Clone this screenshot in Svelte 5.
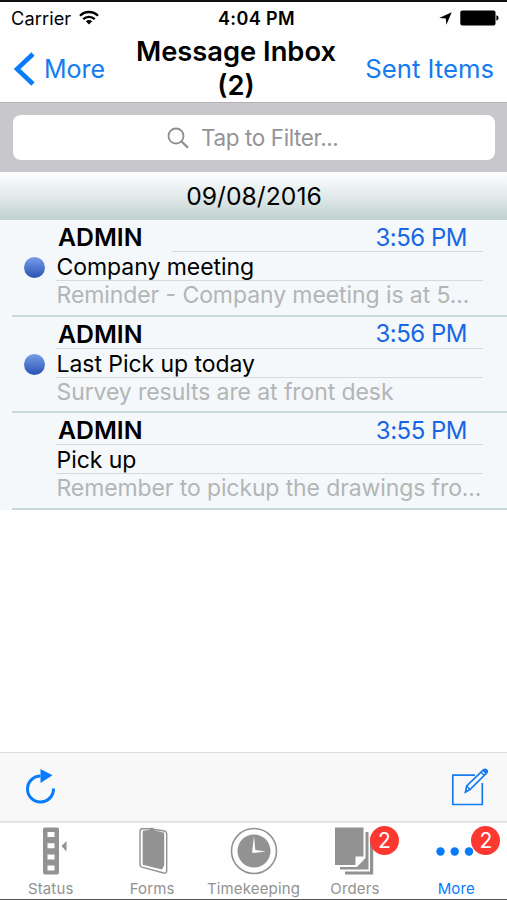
<script lang="ts">
    const messages = [
        { from: 'ADMIN', time: '3:56 PM', subject: 'Company meeting', preview: 'Reminder - Company meeting is at 5...', unread: true, previewWidth: 413 },
        { from: 'ADMIN', time: '3:56 PM', subject: 'Last Pick up today', preview: 'Survey results are at front desk', unread: true, previewWidth: 337 },
        { from: 'ADMIN', time: '3:55 PM', subject: 'Pick up', preview: 'Remember to pickup the drawings fro...', unread: false, previewWidth: 425 },
    ];

    const tabs = [
        { name: 'Status', badge: 0 },
        { name: 'Forms', badge: 0 },
        { name: 'Timekeeping', badge: 0 },
        { name: 'Orders', badge: 2 },
        { name: 'More', badge: 2 },
    ];

    let currentTab = $state('More');
    let filter = $state('');
</script>

<div class="phone">
    <header class="header">
        <div class="statusBar">
            <div class="statusBar_side">
                <span class="statusBar_carrier">Carrier</span>
                <svg width="20" height="16" viewBox="0 0 20 16" fill="none" stroke="#000" stroke-width="2.3">
                    <path d="M1 5.8C6 .7 14 .7 19 5.8M4.2 9.2c3.3-3.2 8.3-3.2 11.6 0" />
                    <path d="M10 14.5 6.8 11.3c1.8-1.7 4.6-1.7 6.4 0z" fill="#000" stroke="none" />
                </svg>
            </div>
            <span class="statusBar_time">4:04 PM</span>
            <div class="statusBar_side isRight">
                <svg width="13" height="13" viewBox="0 0 13 13">
                    <path d="M12.7.3 7.4 12.8 6.8 6.5.2 6z" />
                </svg>
                <svg class="statusBar_battery" width="39" height="16" viewBox="0 0 39 16">
                    <rect x=".3" y=".5" width="35.2" height="15" rx="2" />
                    <path d="M36.4 5.3q2.2.8 2.2 2.7t-2.2 2.7z" />
                </svg>
            </div>
        </div>
        <nav class="navBar">
            <button class="navBar_button">
                <svg width="21" height="34" viewBox="0 0 21 34" fill="none" stroke="#087bfb" stroke-width="4.6">
                    <path d="M19 2 3 17 19 32" />
                </svg>
                <span class="navBar_back">More</span>
            </button>
            <h1 class="navBar_title"><span>Message Inbox</span><span>(2)</span></h1>
            <button class="navBar_button isRight"><span class="navBar_sent">Sent Items</span></button>
        </nav>
    </header>

    <div class="search">
        <label class="search_field">
            <svg width="22" height="22" viewBox="0 0 22 22" fill="none" stroke="#8f8f93">
                <circle cx="9" cy="9" r="7.5" stroke-width="1.8" />
                <path d="m14.5 14.5 6.5 6.2" stroke-width="2.3" />
            </svg>
            <input class="search_input" placeholder="Tap to Filter..." bind:value={filter} />
        </label>
    </div>

    <main class="inbox">
        <h2 class="inbox_date"><span>09/08/2016</span></h2>
        {#each messages as message, i}
            <article class="message">
                <div class="message_marker">
                    {#if message.unread}<i class="message_dot"></i>{/if}
                </div>
                <div class="message_body">
                    <div class="message_row isTop" class:isShort={i === 0}>
                        <b class="message_from">{message.from}</b>
                        <time class="message_time">{message.time}</time>
                    </div>
                    <div class="message_row isSubject">{message.subject}</div>
                    <div class="message_row isPreview">
                        <svg width="427" height="30">
                            <text x="0.5" y="22" textLength={message.previewWidth} lengthAdjust="spacing">{message.preview}</text>
                        </svg>
                    </div>
                </div>
            </article>
        {/each}
    </main>

    <div class="toolbar">
        <button class="toolbar_refresh" aria-label="Refresh">
            <svg width="32" height="38" viewBox="0 0 32 38">
                <path d="M16.5 9A13 13 0 1 0 29.5 21.5" fill="none" stroke="#087bfb" stroke-width="3" />
                <path d="M16.5 2v14l12-7.7z" fill="#087bfb" />
            </svg>
        </button>
        <button aria-label="Compose">
            <svg width="38" height="38" viewBox="0 0 38 38" fill="none" stroke="#147bf0" stroke-width="1.7">
                <path d="M24 7.2H1.8V36.500H31.3V15" />
                <path d="m14.5 24 1.2-6L32.3 2c1.2-1 2.2-.9 3.2 0 1 1 1 2.2 0 3.2L19 21.5z" fill="#f8f8f8" />
                <path d="m15.7 18 3.3 3.5M30 4.2l3.3 3.3" stroke-width="1.3" />
                <path d="m31.5 2.8 2-1.9c1.5-1 4.2 1.3 3 3l-2 2z" fill="#147bf0" stroke="none" />
            </svg>
        </button>
    </div>

    <nav class="tabBar">
        {#each tabs as tab}
            <button class="tab" class:isCurrent={tab.name === currentTab} onclick={() => (currentTab = tab.name)}>
                <span class="tab_icon">
                    {#if tab.name === 'Status'}
                        <svg width="48" height="48" viewBox="0 0 48 48" fill="currentColor">
                            <path fill-rule="evenodd" d="M18 .5h12q2 0 2 2v43q0 2-2 2H18q-2 0-2-2v-43q0-2 2-2zm2.500 4.500v5h7V5zm0 11.200v5h7v-5zm0 11.200v5h7v-5zm0 11.100v5h7v-5zM34.500 19l5-5v10.500z" />
                        </svg>
                    {:else if tab.name === 'Forms'}
                        <svg width="48" height="48" viewBox="0 0 48 48" fill="none" stroke="currentColor" stroke-width="1.4">
                            <path d="M14 1.8h8l14.5 2.2q2.200.6 2.200 2.500v37q0 3.200-3 2.500L14 40.200q-2-.6-2-2.500V4.500q0-2.700 2-2.700z" />
                            <path d="M14.700 3.700 21 3l3-2.700L27.200 3.500 36.200 5.800v32.500l-2.200 4.200-19.300-4.700z" fill="currentColor" stroke="none" />
                        </svg>
                    {:else if tab.name === 'Timekeeping'}
                        <svg width="48" height="48" viewBox="0 0 48 48">
                            <circle cx="24" cy="24" r="22.5" fill="none" stroke="currentColor" stroke-width="1.6" />
                            <circle cx="24" cy="24" r="16.5" fill="currentColor" />
                            <path d="m24 9 1.3 14L36 24.5l-10.7 1.2h-3V23z" fill="#fff" />
                        </svg>
                    {:else if tab.name === 'Orders'}
                        <svg width="48" height="48" viewBox="0 0 48 48" fill="currentColor">
                            <path d="M4 .5h28.5v29L24 38H4z" />
                            <path d="M34.5 5h3v37.5H9V40h17l8.5-9zM39 10h3.2v37.5H14V44.5h25z" />
                            <path d="M24.5 38v-8.5H33z" fill="#fff" />
                        </svg>
                    {:else}
                        <svg width="48" height="48" viewBox="0 0 48 48" fill="#087bfb">
                            <circle cx="8.5" cy="24.5" r="4.2" />
                            <circle cx="22.7" cy="24.5" r="4.2" />
                            <circle cx="37" cy="24.5" r="4.2" />
                        </svg>
                    {/if}
                    {#if tab.badge}<span class="tab_badge">{tab.badge}</span>{/if}
                </span>
                <span class="tab_label">{tab.name}</span>
            </button>
        {/each}
    </nav>
</div>

<style>
    :global(body) {
        background: #fff;
    }

    .phone {
        box-sizing: border-box;
        display: flex;
        flex-direction: column;
        height: 900px;
        border-top: 2px solid #111;
        border-bottom: 1px solid #555;
        font-family: Inter, sans-serif;
        background: #fff;
        overflow: hidden;
    }

    button {
        padding: 0;
        border: 0;
        background: none;
        font-family: inherit;
        color: inherit;
    }

    svg {
        display: block;
        flex: none;
    }

    .header {
        height: 101px;
        box-sizing: border-box;
        flex: none;
        border-bottom: 1px solid #b2b2b5;
        background: #fefefe;
    }

    .statusBar {
        display: grid;
        grid-template-columns: 1fr auto 1fr;
        align-items: center;
        height: 32px;
        padding: 0 8px 0 11px;
        font-size: 18px;
    }

    .statusBar_side {
        display: flex;
        align-items: center;
        gap: 8px;
    }

    .statusBar_carrier {
        font-size: 18.2px;
        letter-spacing: 0.1px;
    }

    .statusBar_side.isRight {
        justify-content: flex-end;
    }

    .statusBar_time {
        padding-left: 3px;
        font-weight: 600;
        font-size: 18px;
        letter-spacing: 0.4px;
    }

    .navBar {
        display: grid;
        grid-template-columns: 124px 224px 1fr;
        height: 68px;
    }

    .navBar_button {
        display: flex;
        align-items: center;
        gap: 9px;
        padding: 0 0 0 14px;
        font-size: 25px;
        color: #147bf0;
    }

    .navBar_button.isRight {
        justify-content: flex-end;
        padding: 0 13px 0 0;
        font-size: 25.7px;
        white-space: nowrap;
    }

    .navBar_title {
        display: flex;
        flex-direction: column;
        align-items: center;
        margin: 1px 0 0;
        font-size: 27.3px;
        font-weight: 600;
        line-height: 34px;
        white-space: nowrap;
    }

    .search {
        box-sizing: border-box;
        flex: none;
        height: 69px;
        padding: 12px 12px 12px 13px;
        background: #c8c7cc;
    }

    .search_field {
        display: flex;
        align-items: center;
        gap: 12px;
        height: 45px;
        padding-left: 154px;
        border-radius: 8px;
        background: #fff;
    }

    .search_input {
        width: 180px;
        padding: 0;
        border: 0;
        outline: 0;
        background: none;
        font: 22.5px Inter, sans-serif;
        letter-spacing: -0.4px;
    }

    .search_input::placeholder {
        color: #949498;
        opacity: 1;
    }

    .inbox {
        flex: 1;
    }

    .inbox_date {
        height: 48px;
        margin: 0;
        padding-left: 1px;
        font-size: 24.7px;
        font-weight: 400;
        line-height: 49px;
        text-align: center;
        background: linear-gradient(#fdfefe, #e2eaea 50%, #c0d1d0);
    }

    .message {
        display: flex;
        height: 96.6px;
        background: linear-gradient(#cad9d8, #cad9d8) 12px 100% / 100% 2px no-repeat #f4f8fa;
    }

    .message_marker {
        width: 56px;
        flex: none;
        padding: 37px 0 0 24px;
        box-sizing: border-box;
    }

    .message_dot {
        display: block;
        width: 21px;
        height: 21px;
        border-radius: 50%;
        background: linear-gradient(#789de8, #2853b4);
    }

    .message_body {
        width: 427px;
    }

    .message_row {
        display: flex;
        align-items: center;
        box-sizing: border-box;
        white-space: nowrap;
    }

    .message_row.isTop {
        justify-content: space-between;
        height: 32px;
        padding: 3px 16px 0 2px;
        border-bottom: 1px solid #d4dadd;
    }

    .message_row.isShort {
        border-image: linear-gradient(90deg, transparent 116px, #d4dadd 116px) 1;
    }

    .message_row.isSubject {
        height: 29px;
        padding: 2px 0 0 0.5px;
        border-bottom: 1px solid #d4dadd;
        font-size: 23px;
        letter-spacing: -0.05px;
    }

    .message_row.isPreview {
        height: 30px;
        font-size: 23px;
        fill: #b3b5b6;
    }

    .message_from {
        font-size: 24.8px;
        font-weight: 600;
    }

    .message_time {
        font-size: 24px;
        letter-spacing: -0.5px;
        color: #1767e5;
    }

    .toolbar {
        box-sizing: border-box;
        display: flex;
        flex: none;
        align-items: center;
        justify-content: space-between;
        height: 69px;
        padding: 0 18px 0 24px;
        border-top: 1px solid #dedede;
        background: #f8f8f8;
    }

    .toolbar_refresh {
        padding-bottom: 3px;
    }

    .tabBar {
        box-sizing: border-box;
        display: flex;
        flex: none;
        height: 78px;
        border-top: 2px solid #e5e5e5;
        background: #fefefe;
    }

    .tab {
        display: flex;
        flex: 1 1 0;
        flex-direction: column;
        align-items: center;
        min-width: 0;
        padding-top: 4px;
        color: #929292;
    }

    .tab.isCurrent {
        color: #087bfb;
    }

    .tab_icon {
        position: relative;
        height: 52px;
    }

    .tab_badge {
        position: absolute;
        left: 39px;
        top: -1px;
        width: 29px;
        height: 29px;
        border-radius: 50%;
        background: #fd3830;
        color: #fff;
        font-size: 21px;
        line-height: 29px;
        text-align: center;
    }

    .tab_label {
        font-size: 15px;
        line-height: 20px;
        letter-spacing: 0.15px;
    }
</style>
